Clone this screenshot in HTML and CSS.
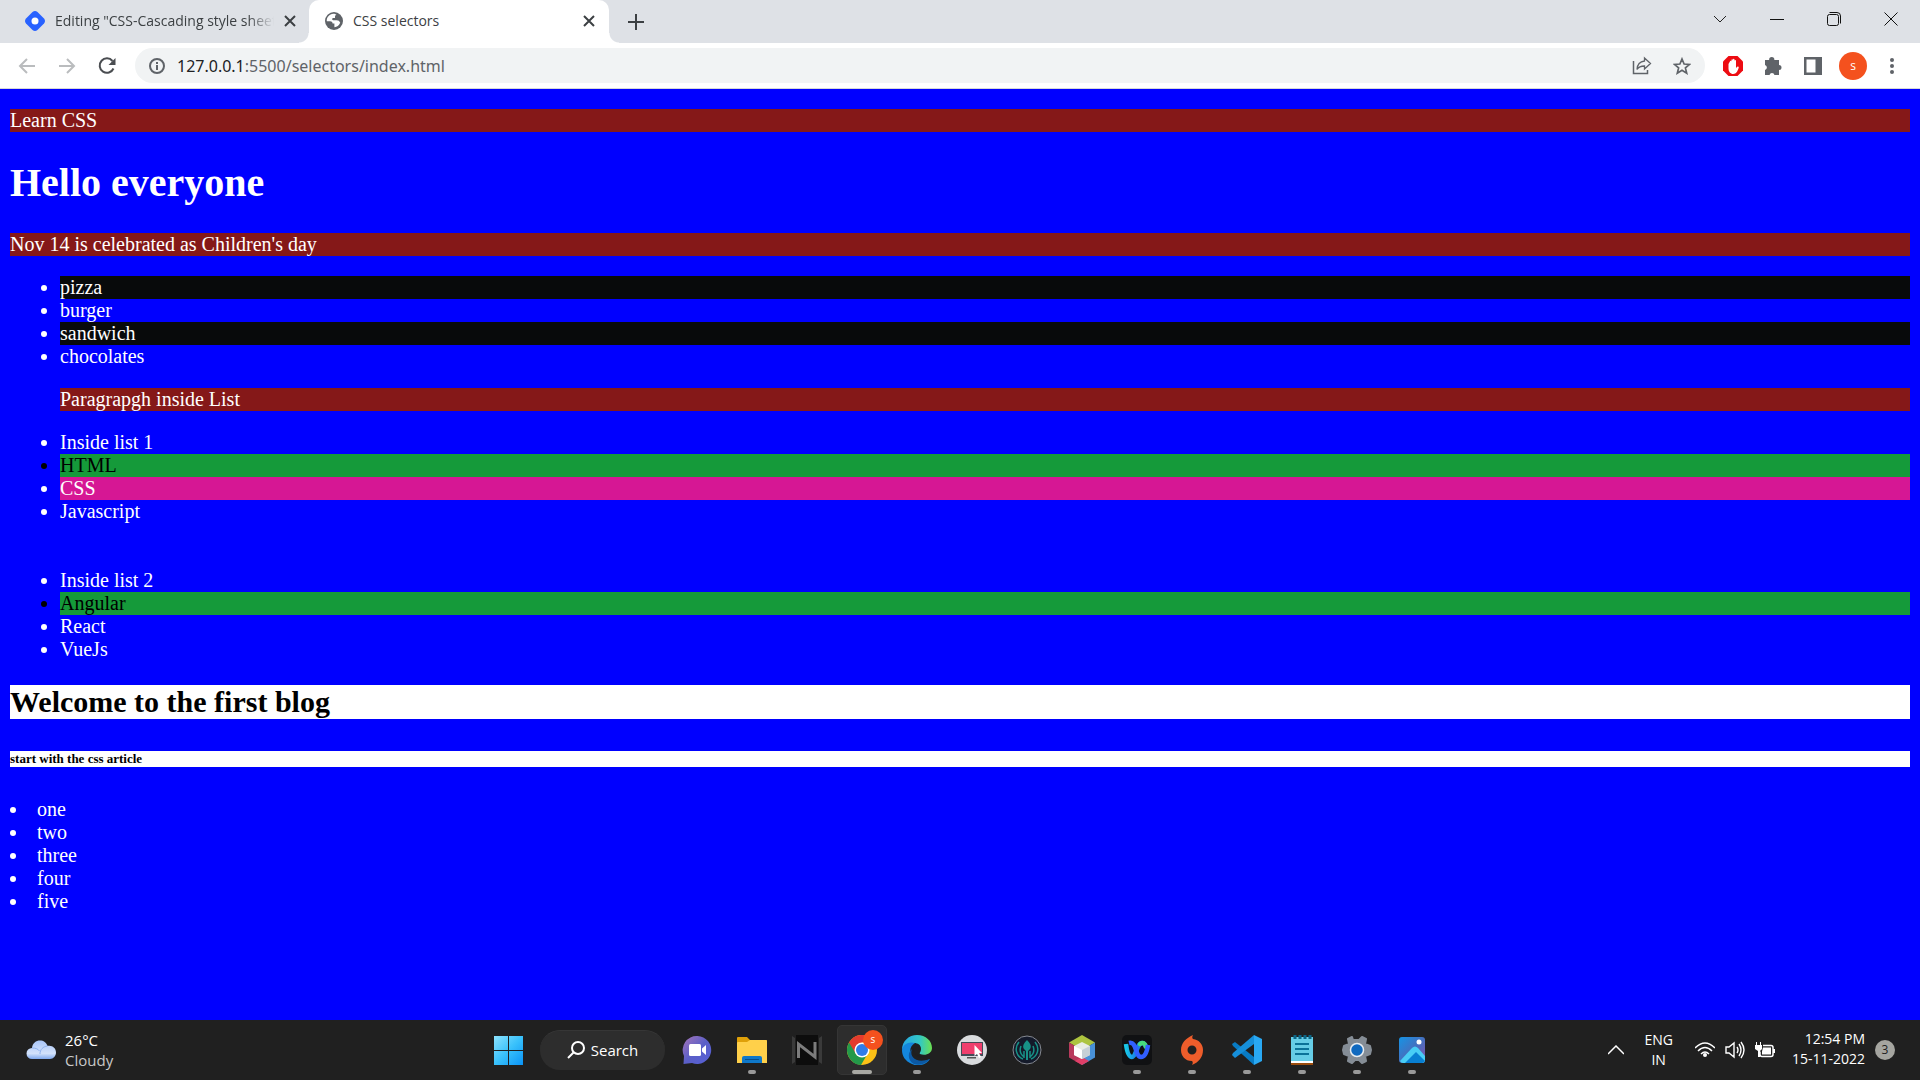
FILE: index.html
```html
<!DOCTYPE html>
<html lang="en">
<head>
<meta charset="utf-8">
<title>CSS selectors</title>
<link rel="stylesheet" href="styles.css">
</head>
<body>
<header class="browser">
  <div class="tabstrip">
    <div class="tab tab-back">
      <svg width="20" height="20" viewBox="0 0 20 20"><path fill="#2962ff" d="M7.500 1Q10-1 12.500 1L19 7.500Q21 10 19 12.500L12.500 19Q10 21 7.500 19L1 12.500Q-1 10 1 7.500Z"/><circle cx="10" cy="10" r="3.500" fill="#fff"/></svg>
      <span class="tab-title tab-title-long">Editing "CSS-Cascading style sheets"</span>
      <button class="tab-close" aria-label="Close tab"><svg width="12" height="12" viewBox="0 0 12 12"><path d="M1 1l10 10M11 1L1 11" stroke="#3c4043" stroke-width="2"/></svg></button>
    </div>
    <div class="tab tab-front">
      <svg width="18" height="18" viewBox="0 0 18 18"><circle cx="9" cy="9" r="9" fill="#5f6368"/><path d="M9.500 1.800C5 1 1.300 5.200 1.800 9.300L5 9.200c2 .2 2.600 1 2.600 2.400h1.800v3.600c2.500-.3 4.800-1.800 5.800-4.500-.7-1.700-1.800-2.500-3.600-2.500H8.200c-1.400-.4-1.500-1.800-.2-2.300h2V4.600c0-1 .5-1.500 1.500-1.900z" fill="#fff"/></svg>
      <span class="tab-title">CSS selectors</span>
      <button class="tab-close" aria-label="Close tab"><svg width="12" height="12" viewBox="0 0 12 12"><path d="M1 1l10 10M11 1L1 11" stroke="#3c4043" stroke-width="2"/></svg></button>
    </div>
    <button class="new-tab" aria-label="New tab"><svg width="16" height="16" viewBox="0 0 16 16"><path d="M8 0v16M0 8h16" stroke="#3c4043" stroke-width="2"/></svg></button>
    <div class="window-controls">
      <button aria-label="Search tabs"><svg width="14" height="14" viewBox="0 0 14 14"><path d="M1 4l6 6 6-6" fill="none" stroke="#222"/></svg></button>
      <button aria-label="Minimize"><svg width="14" height="14" viewBox="0 0 14 14"><path d="M0 7.500h14" stroke="#111"/></svg></button>
      <button aria-label="Restore"><svg width="14" height="14" viewBox="0 0 14 14"><rect x=".5" y="2.500" width="11" height="11" rx="2" fill="none" stroke="#111"/><path d="M2.500 .5H10Q13.500 .5 13.500 4v7.500" fill="none" stroke="#111"/></svg></button>
      <button aria-label="Close"><svg width="14" height="14" viewBox="0 0 14 14"><path d="M.5 .5l13 13M13.500 .5L.5 13.500" stroke="#111"/></svg></button>
    </div>
  </div>
  <div class="toolbar">
    <button class="nav-button" aria-label="Back"><svg width="18" height="18" viewBox="0 0 18 18"><path d="M17 9H2M9 2L2 9l7 7" fill="none" stroke="#babcbe" stroke-width="2"/></svg></button>
    <button class="nav-button" aria-label="Forward"><svg width="18" height="18" viewBox="0 0 18 18"><path d="M1 9h15M9 2l7 7-7 7" fill="none" stroke="#babcbe" stroke-width="2"/></svg></button>
    <button class="nav-button" aria-label="Reload"><svg width="18" height="18" viewBox="0 0 18 18"><path d="M14.500 4A7.200 7.200 0 1 0 15.500 11.500" fill="none" stroke="#4a4d51" stroke-width="2"/><path d="M17.500 1v7h-7z" fill="#4a4d51"/></svg></button>
    <div class="omnibox">
      <svg width="16" height="16" viewBox="0 0 16 16"><circle cx="8" cy="8" r="7" fill="none" stroke="#5f6368" stroke-width="2"/><path d="M8 7v5M8 4v2" stroke="#5f6368" stroke-width="2"/></svg>
      <a class="address" href="#"><span class="host">127.0.0.1</span>:5500/selectors/index.html</a>
      <button aria-label="Share"><svg width="20" height="20" viewBox="0 0 20 20"><path d="M1.500 5v12.500h14V14" fill="none" stroke="#5f6368" stroke-width="1.500"/><path d="M12.500 2l6 5.500-6 5.500V10C9 10 6.500 11 5 13.500 5.300 8.500 8 5.500 12.500 5z" fill="none" stroke="#5f6368" stroke-width="1.300"/></svg></button>
      <button aria-label="Bookmark"><svg width="18" height="18" viewBox="0 0 18 18"><path d="M9 2l2.100 5 5.400.4-4.100 3.500 1.300 5.300L9 13.300l-4.700 2.900 1.300-5.300-4.100-3.500L6.900 7z" fill="none" stroke="#5f6368" stroke-width="1.700"/></svg></button>
    </div>
    <button class="tool" aria-label="Ad blocker"><svg width="22" height="22" viewBox="0 0 22 22"><path d="M6.500 1h9L21 6.500v9L15.500 21h-9L1 15.500v-9z" fill="#ed0c12"/><path d="M6.500 9v4.500c0 3 2 5.500 4.700 5.500 3 0 4.200-2.300 5.500-6.200.4-1.300-1.200-1.900-1.900-.8l-.8 1.300V5.800c0-1.200-1.500-1.200-1.500 0V4.600c0-1.200-1.500-1.200-1.500 0v.6c0-1.200-1.600-1.200-1.600 0v1.400c0-1.200-1.500-1.200-1.500 0z" fill="#fff"/></svg></button>
    <button class="tool" aria-label="Extensions"><svg width="20" height="20" viewBox="0 0 20 20"><path d="M2 4h4.200a2.600 2.600 0 1 1 5.100 0H16v5a2.500 2.500 0 1 1 0 5v5h-4.500a2.600 2.600 0 0 0-5 0H2v-5a2.600 2.600 0 0 0 0-5z" fill="#5f6368"/></svg></button>
    <button class="tool" aria-label="Side panel"><svg width="18" height="18" viewBox="0 0 18 18"><path d="M0 0h18v18H0z" fill="#5f6368"/><path d="M2.500 2.500h9v13h-9z" fill="#fff"/></svg></button>
    <button class="avatar" aria-label="Profile">s</button>
    <button class="menu" aria-label="Menu"><svg width="4" height="18" viewBox="0 0 4 18"><g fill="#5f6368"><circle cx="2" cy="3" r="2"/><circle cx="2" cy="9" r="2"/><circle cx="2" cy="15" r="2"/></g></svg></button>
  </div>
</header>

<main class="page">
  <p>Learn CSS</p>
  <h1>Hello everyone</h1>
  <p>Nov 14 is celebrated as Children's day</p>
  <ul class="foods">
    <li class="dark">pizza</li>
    <li>burger</li>
    <li class="dark">sandwich</li>
    <li>chocolates</li>
  </ul>
  <div class="nested">
    <p>Paragrapgh inside List</p>
    <ul>
      <li>Inside list 1</li>
      <li class="green">HTML</li>
      <li class="pink">CSS</li>
      <li>Javascript</li>
    </ul>
    <br><br>
    <ul>
      <li>Inside list 2</li>
      <li class="green">Angular</li>
      <li>React</li>
      <li>VueJs</li>
    </ul>
  </div>
  <h2>Welcome to the first blog</h2>
  <h6>start with the css article</h6>
  <ul class="numbers">
    <li>one</li>
    <li>two</li>
    <li>three</li>
    <li>four</li>
    <li>five</li>
  </ul>
</main>

<footer class="taskbar">
  <div class="weather">
    <svg width="30" height="20" viewBox="0 0 30 20"><defs><linearGradient id="cloud" x2="0" y2="1"><stop offset="0" stop-color="#a9c6f8"/><stop offset=".7" stop-color="#d3e2fb"/><stop offset="1" stop-color="#7fa9ee"/></linearGradient></defs><path d="M6 19a5.500 5.500 0 0 1 0-11C6.500 3 10 .5 14 .5c3.500 0 6.500 2 7.500 5.500C26 5 30 8 30 12.500c0 3.500-2.500 6.500-6 6.500z" fill="url(#cloud)"/><path d="M6 8c4 0 6 1 7.500 3M14 14c0-4.500 3-7.500 7.500-8" fill="none" stroke="#8db1ee"/></svg>
    <div class="weather-text"><span>26°C</span><span class="dim">Cloudy</span></div>
  </div>
  <nav class="apps">
    <button class="app" aria-label="Start"><svg width="30" height="30" viewBox="0 0 30 30"><defs><linearGradient id="win" x2="1" y2="1"><stop offset="0" stop-color="#8de3ff"/><stop offset=".5" stop-color="#39c1fb"/><stop offset="1" stop-color="#0a93f6"/></linearGradient></defs><path d="M1 1h14v14H1zM16 1h14v14H16zM1 16h14v14H1zM16 16h14v14H16z" fill="url(#win)"/></svg></button>
    <button class="search"><svg width="18" height="18" viewBox="0 0 18 18"><circle cx="11" cy="7" r="6" fill="none" stroke="#fff" stroke-width="2"/><path d="M7 11l-6 6" stroke="#fff" stroke-width="2"/></svg>Search</button>
    <button class="app" aria-label="Chat"><svg width="30" height="30" viewBox="0 0 30 30"><defs><linearGradient id="chat" x2="1" y2="1"><stop offset="0" stop-color="#a875b8"/><stop offset=".5" stop-color="#5b5fc7"/><stop offset="1" stop-color="#5560d8"/></linearGradient></defs><path d="M15.500 1A14 14 0 1 1 10 28L1.500 29 2 21A14 14 0 0 1 15.500 1z" fill="url(#chat)"/><rect x="7" y="9" width="12" height="12" rx="1.500" fill="#fff"/><path d="M20 13.500l4-3.500v10l-4-3.500z" fill="#fff"/></svg></button>
    <button class="app running" aria-label="Files"><svg width="30" height="30" viewBox="0 0 30 30"><path d="M0 3q0-1 1-1h9l3 3h16q1 0 1 2v5H0z" fill="#dfa009"/><path d="M0 8q0-1 1-1h9l3-2h16q1 0 1 1v22H0z" fill="#ffd04a"/><path d="M5 28v-5q0-2 2-2h16q2 0 2 2v5z" fill="#0f78c9"/><path d="M8 24.500h14" stroke="#084e8b"/></svg></button>
    <button class="app" aria-label="Notes"><svg width="30" height="30" viewBox="0 0 30 30"><path d="M4 0h22v30H4z" fill="#0d0d0d"/><path d="M0 1l3 2v24l-3 2zM30 1l-3 2v24l3 2z" fill="#3a3a3a"/><path d="M6.500 23V9L23 22V7" fill="none" stroke="#7c7c7c" stroke-width="3"/></svg></button>
    <button class="app running active" aria-label="Chrome"><svg width="30" height="30" viewBox="0 0 30 30"><circle cx="15" cy="15" r="15" fill="#fbc116"/><path d="M15 15L2 7.500A15 15 0 0 0 14 30l7-12z" fill="#23994a"/><path d="M2 7.500A15 15 0 0 1 28 7.500H15L9 19z" fill="#e33b2e"/><circle cx="15" cy="15" r="7.500" fill="#fff"/><circle cx="15" cy="15" r="6" fill="#307ce8"/></svg><span class="badge">s</span></button>
    <button class="app running" aria-label="Edge"><svg width="30" height="30" viewBox="0 0 30 30"><defs><linearGradient id="edge" x2="1"><stop offset="0" stop-color="#26a6e6"/><stop offset=".6" stop-color="#33c8c4"/><stop offset="1" stop-color="#6be150"/></linearGradient></defs><path d="M0 15C0 6 7 0 15 0c9 0 15 6 15 13 0 6-7 8-12 6-1-1 1-2 1-5 0-4-3-6-7-6C7 8 2 11 0 15z" fill="url(#edge)"/><path d="M0 15C1 9 7 6 13 8c-4 2-6 7-4 12 3 7 12 8 19 4-4 6-12 8-18 5C3 26 0 21 0 15z" fill="#1486dc"/><path d="M10 14c-3 8 4 15 18 10-4 5-11 7-16 5-6-3-7-11-2-15z" fill="#0c59a4"/><path d="M12 13c-1 6 6 10 14 8-5 4-13 1-15-4 0-2 0-3 1-4z" fill="#1f1f1f"/></svg></button>
    <button class="app" aria-label="Screen capture"><svg width="30" height="30" viewBox="0 0 30 30"><circle cx="15" cy="15" r="15" fill="#d9dbde"/><path d="M4 7h22v14H4z" fill="#434b57"/><path d="M5 8h20v11H5z" fill="#ef3e6d"/><path d="M10 22h9v1.500h-9z" fill="#555"/><path d="M17.500 10v11l2.500-2 2 4 2-1-2-4h3z" fill="#fff"/></svg></button>
    <button class="app" aria-label="Git client"><svg width="30" height="30" viewBox="0 0 30 30"><circle cx="15" cy="15" r="14" fill="#141a2a" stroke="#858991"/><path d="M15 5c-3 3-5 6-3 9l2 2v9h2v-9l2-2c2-3 0-6-3-9z" fill="#179287"/><path d="M7 7c-5 6-3 14 4 17M23 7c5 6 3 14-4 17M9 11c-2 5-1 8 3 11M21 11c2 5 1 8-3 11M12 16v7M18 16v7" fill="none" stroke="#179287" stroke-width="1.500"/></svg></button>
    <button class="app" aria-label="NetBeans"><svg width="28" height="30" viewBox="0 0 28 30"><path d="M14 0l13 7.500L14 15 1 7.500z" fill="#adc43f"/><path d="M1 7.500L14 15v15L1 22.500z" fill="#b83a5c"/><path d="M27 7.500L14 15v15l13-7.500z" fill="#4891d8"/><path d="M14 22l7 4-7 4-7-4z" fill="#e03f68"/><path d="M14 7l8 4v9l-8 4-8-4v-9z" fill="#e9ece2"/><path d="M14 15l8-4v9l-8 4z" fill="#c6d0d7"/><path d="M6 11l8 4v9l-8-4z" fill="#fff"/></svg></button>
    <button class="app running" aria-label="Webex"><svg width="30" height="30" viewBox="0 0 30 30"><defs><linearGradient id="webex" x2="1"><stop offset="0" stop-color="#18c7e7"/><stop offset=".5" stop-color="#187fe8"/><stop offset="1" stop-color="#2765ff"/></linearGradient></defs><rect width="30" height="30" rx="5" fill="#101113"/><path d="M4 9c1 8 3 13 6 13 4 0 5-14 10-14 2 0 3 1 4 4" fill="none" stroke="url(#webex)" stroke-width="4.500"/><path d="M18 9c3-2 5-1 6 3" fill="none" stroke="#47dc7b" stroke-width="4.500" stroke-linecap="round"/><path d="M7 8c8-2 6 14 12 14 4 0 6-5 7-12" fill="none" stroke="#315fff" stroke-width="4.500"/></svg></button>
    <button class="app running" aria-label="Origin"><svg width="24" height="30" viewBox="0 0 24 30"><path d="M13 0c-1 2-1 3 0 4 6 1 10 5 10 11 0 7-4 12-11 15 1-2 1-3 0-4C5 26 1 21 1 15 1 8 6 3 13 0zm-1 10.500a4.500 4.500 0 1 0 0 9 4.500 4.500 0 0 0 0-9z" fill="#ee5d2b"/></svg></button>
    <button class="app running" aria-label="VS Code"><svg width="30" height="30" viewBox="0 0 30 30"><path d="M0 9l3-2 19 15v8L1 11z" fill="#087bc4"/><path d="M0 20l3 3L22 9V0L1 18z" fill="#168fda"/><path d="M22 0l8 4v22l-8 4z" fill="#29a8f3"/></svg></button>
    <button class="app running" aria-label="Notepad"><svg width="22" height="30" viewBox="0 0 22 30"><path d="M0 27h22v3H0z" fill="#9b4c0c"/><path d="M0 2h22v26H0z" fill="#fff"/><path d="M0 2h22v24H0z" fill="#66cde6"/><path d="M4 9h14M4 14h14M4 19h14" stroke="#0b7298" stroke-width="2"/><path d="M4 0v4M9 0v4M14 0v4M19 0v4" stroke="#0b6687" stroke-width="3"/></svg></button>
    <button class="app running" aria-label="Settings"><svg width="30" height="30" viewBox="0 0 30 30"><path d="M11 5l-1-3-4 2 1 5-5 2-1 4 1 4 5 2-1 5 4 2 3-3h4l3 3 4-2-1-5 5-2 1-4-1-4-5-2 1-5-4-2-3 3z" fill="#858d96" stroke="#858d96" stroke-width="2" stroke-linejoin="round"/><circle cx="15" cy="15" r="6.500" fill="#1069bf" stroke="#e9edf1" stroke-width="1.500"/></svg></button>
    <button class="app running" aria-label="Photos"><svg width="26" height="26" viewBox="0 0 26 26"><defs><linearGradient id="photo" x2="1" y2="1"><stop offset="0" stop-color="#1594e5"/><stop offset=".5" stop-color="#4470bf"/><stop offset="1" stop-color="#8751ad"/></linearGradient></defs><rect width="26" height="26" rx="3" fill="url(#photo)"/><path d="M1 24l12-13q3-3 6 0l7 8v4q0 3-3 3H4q-2 0-3-2z" fill="#48cdf5"/><path d="M6 26l11-11 9 9q-1 2-3 2z" fill="#087fd2"/><circle cx="20" cy="5" r="2.500" fill="#fff"/></svg></button>
  </nav>
  <div class="tray">
    <button class="chevron" aria-label="Hidden icons"><svg width="16" height="10" viewBox="0 0 16 10"><path d="M0 9l8-8 8 8" fill="none" stroke="#fff" stroke-width="1.500"/></svg></button>
    <div class="language"><span>ENG</span><span>IN</span></div>
    <div class="status">
      <svg width="20" height="16" viewBox="0 0 20 16"><g fill="none" stroke="#fff" stroke-width="1.500"><path d="M0 6q10-10 20 0M3 9q7-7 14 0M6 12q4-4 8 0"/></g><circle cx="10" cy="13" r="2" fill="#fff"/></svg>
      <svg width="20" height="18" viewBox="0 0 20 18"><path d="M1 6h3l5-4v14l-5-4H1zM12 6q2 3 0 6M14 3q4 6 0 12M16 1q6 8 0 16" fill="none" stroke="#fff" stroke-width="1.400"/></svg>
      <svg width="20" height="16" viewBox="0 0 20 16"><path d="M8 3.500h8q2 0 2 2v7q0 2-2 2H7q-2 0-2-2v-3" fill="none" stroke="#fff" stroke-width="1.500"/><path d="M8 5.500h8v7H7v-3zM18 7h2v4h-2zM0 3h7v4L5 9v6H3V9L0 7zM1 0h1v3H1zM5 0h1v3H5z" fill="#fff"/></svg>
    </div>
    <div class="clock"><span>12:54 PM</span><span>15-11-2022</span></div>
    <button class="notifications" aria-label="Notifications">3</button>
  </div>
</footer>
</body>
</html>
```
FILE: styles.css
```css
* {
  box-sizing: border-box;
}

body {
  margin: 0;
  min-height: 100vh;
  display: flex;
  flex-direction: column;
  background: #00f;
}

button {
  display: flex;
  align-items: center;
  justify-content: center;
  padding: 0;
  border: 0;
  background: none;
  color: inherit;
  font: inherit;
}

svg {
  display: block;
  flex: none;
}

/* Browser window */
.browser {
  background: #fff;
  border-bottom: 1px solid #d5d7da;
  font-family: "Open Sans", "Noto Sans", sans-serif;
  color: #3c4043;
}

.tabstrip {
  display: flex;
  height: 43px;
  background: #dee1e6;
}

.tab {
  display: flex;
  align-items: center;
  gap: 10px;
  padding-bottom: 2px;
  font-size: 14px;
}

.tab-back {
  width: 309px;
  padding-left: 25px;
  padding-right: 13px;
}

.tab-front {
  position: relative;
  width: 300px;
  padding-left: 16px;
  padding-right: 14px;
  border-radius: 10px 10px 0 0;
  background: #fff;
}

/* Flared bottom corners of the selected tab */
.tab-front::before,
.tab-front::after {
  content: "";
  position: absolute;
  bottom: 0;
  width: 10px;
  height: 10px;
}

.tab-front::before {
  right: 100%;
  background: radial-gradient(circle at 0 0, transparent 9px, #fff 10px);
}

.tab-front::after {
  left: 100%;
  background: radial-gradient(circle at 100% 0, transparent 9px, #fff 10px);
}

.tab-title {
  flex: 1;
  overflow: hidden;
  white-space: nowrap;
}

.tab-title-long {
  -webkit-mask-image: linear-gradient(to right, #000 88%, transparent);
  mask-image: linear-gradient(to right, #000 88%, transparent);
}

.new-tab {
  width: 54px;
}

.window-controls {
  display: flex;
  margin-left: auto;
  padding: 0 1px 6px 0;
}

.window-controls button {
  width: 57px;
}

.toolbar {
  display: flex;
  align-items: center;
  height: 45px;
  padding: 0 14px 0 7px;
}

.nav-button {
  width: 40px;
  height: 40px;
}

.omnibox {
  flex: 1;
  display: flex;
  align-items: center;
  height: 35px;
  margin: 0 8px;
  padding: 0 13px 0 14px;
  border-radius: 18px;
  background: #f1f3f4;
}

.omnibox button {
  width: 20px;
  margin-left: 20px;
}

.address {
  flex: 1;
  margin-left: 12px;
  font-family: "Noto Sans", "Open Sans", sans-serif;
  font-size: 16px;
  color: #5f6368;
  text-decoration: none;
}

.host {
  color: #202124;
}

.tool {
  width: 40px;
  height: 40px;
}

.avatar {
  width: 28px;
  height: 28px;
  margin: 0 11px 0 6px;
  border-radius: 50%;
  background: #f4511e;
  color: #fff;
  font-size: 12px;
}

.menu {
  width: 28px;
  height: 28px;
}

/* Web page */
.page {
  flex: 1;
  padding: 20px 10px;
  color: #fff;
  font-family: "Liberation Serif", "Times New Roman", serif;
  font-size: 20px;
  line-height: 23px;
}

.page p {
  margin: 0 0 20px;
  background: #851818;
}

.page h1 {
  margin: 28px 0 27px;
  font-size: 40px;
  line-height: 46px;
}

.page ul {
  margin: 0;
  padding-left: 50px;
}

.page .foods {
  margin-bottom: 20px;
}

.nested p {
  margin-left: 50px;
}

.dark {
  background: #080a0b;
}

.green {
  background: #159a3a;
  color: #000;
}

.pink {
  background: #d61794;
}

.page h2,
.page h6 {
  background: #fff;
  color: #000;
}

.page h2 {
  margin: 24px 0 32px;
  font-size: 30px;
  line-height: 34px;
}

.page h6 {
  margin: 0 0 31px;
  font-size: 13px;
  line-height: 16px;
}

.page .numbers {
  padding-left: 0;
  list-style-position: inside;
}

/* Taskbar */
.taskbar {
  display: grid;
  grid-template-columns: 1fr auto 1fr;
  align-items: center;
  height: 60px;
  background: #202020;
  color: #fff;
  font-family: "Open Sans", "Noto Sans", sans-serif;
  font-size: 15px;
  line-height: 20px;
}

.weather {
  display: flex;
  align-items: center;
  gap: 9px;
  padding-left: 26px;
}

.weather-text,
.language,
.clock {
  display: flex;
  flex-direction: column;
}

.dim {
  color: #c8c8c8;
}

.apps {
  display: flex;
  align-items: center;
  gap: 5px;
}

.app {
  position: relative;
  width: 50px;
  height: 50px;
  border-radius: 5px;
}

.active {
  background: #2d2d2d;
  border: 1px solid #353535;
}

.running::after {
  content: "";
  position: absolute;
  bottom: 1px;
  left: calc(50% - 4px);
  width: 8px;
  height: 4px;
  border-radius: 2px;
  background: #999;
}

.active::after {
  bottom: 0;
  left: calc(50% - 10px);
  width: 20px;
  background: #a9a9a4;
}

.badge {
  position: absolute;
  top: 4px;
  right: 3px;
  width: 20px;
  height: 20px;
  border-radius: 50%;
  background: #f4511e;
  font-size: 10px;
  line-height: 18px;
}

.search {
  width: 125px;
  height: 40px;
  gap: 6px;
  margin: 0 2px;
  padding-bottom: 2px;
  border-radius: 20px;
  background: #2d2d2d;
  border-top: 1px solid #363636;
}

.tray {
  display: flex;
  align-items: center;
  justify-content: flex-end;
  padding-right: 25px;
  font-size: 14px;
}

.chevron {
  width: 40px;
  height: 40px;
}

.language {
  margin-left: 8px;
  text-align: center;
}

.status {
  display: flex;
  align-items: center;
  gap: 10px;
  margin: 0 17px 0 22px;
}

.clock {
  padding-bottom: 2px;
  text-align: right;
}

.notifications {
  width: 20px;
  height: 20px;
  margin-left: 10px;
  border-radius: 50%;
  background: #a5a5a0;
  color: #202020;
  font-size: 12px;
}
```
